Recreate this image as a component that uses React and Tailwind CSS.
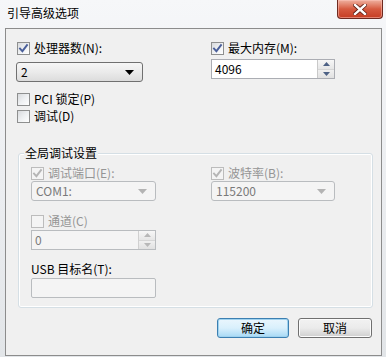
import React from 'react'

const FONT = "font-['Noto_Sans_CJK_SC','Microsoft_YaHei',sans-serif]"

// Win7 style checkbox with optional check mark
const Check = ({ checked, disabled }) => (
  <span
    className={`inline-flex h-[13px] w-[13px] shrink-0 items-center justify-center border ${
      disabled ? 'border-[#bcbcbc] bg-[#f4f4f4]' : 'border-[#8e8f8f] bg-gradient-to-br from-[#d8dadd] via-[#eef0f2] to-[#ffffff]'
    }`}
  >
    {checked && (
      <svg width="11" height="11" viewBox="0 0 11 11">
        <path
          d="M2 5.6 L4.4 8.2 L9 2.2"
          fill="none"
          stroke={disabled ? '#b5b5b5' : '#4a5f9a'}
          strokeWidth="1.9"
          strokeLinecap="square"
        />
      </svg>
    )}
  </span>
)

const CheckRow = ({ checked, disabled, children }) => (
  <div className="flex h-[14px] items-center gap-[4px]">
    <Check checked={checked} disabled={disabled} />
    <span className={`text-[12px] leading-[14px] ${disabled ? 'text-[#959595]' : 'text-black'}`}>{children}</span>
  </div>
)

const Arrow = ({ color }) => (
  <svg width="9" height="5" viewBox="0 0 9 5">
    <path d="M0 0 H9 L4.5 5 Z" fill={color} />
  </svg>
)

const Combo = ({ value, disabled, width }) => (
  <div
    className={`flex h-[20px] items-center justify-between rounded-[3px] border pl-[4px] pr-[8px] ${width} ${
      disabled
        ? 'border-[#b9bcbf] bg-[#f4f4f4] text-[#7a7a7a]'
        : 'border-[#707070] bg-gradient-to-b from-[#f6f6f6] via-[#ebebeb] to-[#dcdcdc] text-black'
    }`}
  >
    <span className="text-[12px] leading-none">{value}</span>
    <Arrow color={disabled ? '#b3b3b3' : '#000'} />
  </div>
)

const Spin = ({ value, disabled, width }) => (
  <div
    className={`flex h-[20px] items-stretch border ${width} ${
      disabled ? 'border-[#b9bcbf] bg-[#f4f4f4] text-[#7a7a7a]' : 'border-[#abadb3] bg-white text-black'
    }`}
  >
    <span className="flex flex-1 items-center pl-[3px] text-[12px] leading-none">{value}</span>
    <div className={`flex w-[17px] flex-col border-l ${disabled ? 'border-[#d0d0d0]' : 'border-[#c9c9c9]'}`}>
      <div className="flex flex-1 items-center justify-center border-b border-[#d6d6d6] bg-gradient-to-b from-[#f7f7f7] to-[#e6e6e6]">
        <svg width="7" height="4" viewBox="0 0 7 4">
          <path d="M0 4 H7 L3.5 0 Z" fill={disabled ? '#b8b8b8' : '#4d6185'} />
        </svg>
      </div>
      <div className="flex flex-1 items-center justify-center bg-gradient-to-b from-[#f0f0f0] to-[#e1e1e1]">
        <svg width="7" height="4" viewBox="0 0 7 4">
          <path d="M0 0 H7 L3.5 4 Z" fill={disabled ? '#b8b8b8' : '#4d6185'} />
        </svg>
      </div>
    </div>
  </div>
)

const Button = ({ children, primary }) => (
  <button
    className={`h-[20px] rounded-[3px] border text-[12px] leading-none text-black ${
      primary
        ? 'w-[72px] border-[#3c7fb1] bg-gradient-to-b from-[#eaf6fd] via-[#d9f0fc] to-[#a7d9f5] shadow-[inset_0_0_0_1px_#9fd2ef]'
        : 'w-[74px] border-[#707070] bg-gradient-to-b from-[#f2f2f2] via-[#ebebeb] to-[#cfcfcf] shadow-[inset_0_0_0_1px_#fcfcfc]'
    }`}
  >
    {children}
  </button>
)

export default function App() {
  return (
    <div className={`flex h-[357px] w-[386px] flex-col bg-gradient-to-b from-[#f6f7f9] via-[#eceef1] to-[#e2e5e8] ${FONT}`}>
      {/* title bar */}
      <div className="relative flex h-[28px] shrink-0 items-start">
        <span className="pl-[7px] pt-[5px] text-[12px] leading-[16px] text-black">引导高级选项</span>
        <div className="absolute right-[3px] top-0 flex h-[19px] w-[46px] items-center justify-center rounded-b-[4px] border border-t-0 border-[#6e2a20] bg-gradient-to-b from-[#eeb0a0] via-[#d65a40] to-[#c53c22] shadow-[inset_0_0_0_1px_rgba(255,200,190,0.5)]">
          <svg width="14" height="11" viewBox="0 0 14 11">
            <path d="M2 1 L12 10 M12 1 L2 10" stroke="#5a1a10" strokeWidth="4" strokeLinecap="square" />
            <path d="M2 1 L12 10 M12 1 L2 10" stroke="#ffffff" strokeWidth="2.4" strokeLinecap="square" />
          </svg>
        </div>
      </div>

      {/* client area */}
      <div className="ml-[5px] mr-[4px] flex h-[328px] flex-col border border-[#8c8c8c] bg-[#f0f0f0]">
        <div className="grid grid-cols-[194px_1fr] pl-[11px] pt-[12px]">
          <div className="flex flex-col">
            <CheckRow checked>处理器数(N):</CheckRow>
            <div className="-ml-[1px] mt-[7px]">
              <Combo value="2" width="w-[127px]" />
            </div>
            <div className="mt-[10px]">
              <CheckRow>PCI 锁定(P)</CheckRow>
            </div>
            <div className="mt-[3px]">
              <CheckRow>调试(D)</CheckRow>
            </div>
          </div>
          <div className="flex flex-col">
            <CheckRow checked>最大内存(M):</CheckRow>
            <div className="mt-[4px]">
              <Spin value="4096" width="w-[124px]" />
            </div>
          </div>
        </div>

        {/* group box */}
        <div className="relative ml-[12px] mr-[8px] mt-[30px] h-[155px] rounded-[3px] border border-[#d5dfe5] shadow-[inset_0_0_0_1px_#ffffff]">
          <span className="absolute -top-[8px] left-[5px] bg-[#f0f0f0] px-[1px] text-[12px] leading-[14px] text-black">全局调试设置</span>
          <div className="grid grid-cols-[180px_1fr] pl-[12px] pt-[12px]">
            <div className="flex flex-col">
              <CheckRow checked disabled>调试端口(E):</CheckRow>
              <div className="mt-[1px]">
                <Combo value="COM1:" disabled width="w-[125px]" />
              </div>
              <div className="mt-[13px]">
                <CheckRow disabled>通道(C)</CheckRow>
              </div>
              <div className="mt-[2px]">
                <Spin value="0" disabled width="w-[125px]" />
              </div>
              <span className="mt-[12px] text-[12px] leading-[14px] text-black">USB 目标名(T):</span>
              <div className="mt-[2px] h-[20px] w-[125px] rounded-[2px] border border-[#b9bcbf] bg-[#f4f4f4]" />
            </div>
            <div className="flex flex-col">
              <CheckRow checked disabled>波特率(B):</CheckRow>
              <div className="mt-[1px]">
                <Combo value="115200" disabled width="w-[124px]" />
              </div>
            </div>
          </div>
        </div>

        <div className="mr-[9px] mt-[10px] flex justify-end gap-[9px]">
          <Button primary>确定</Button>
          <Button>取消</Button>
        </div>
      </div>
    </div>
  )
}
